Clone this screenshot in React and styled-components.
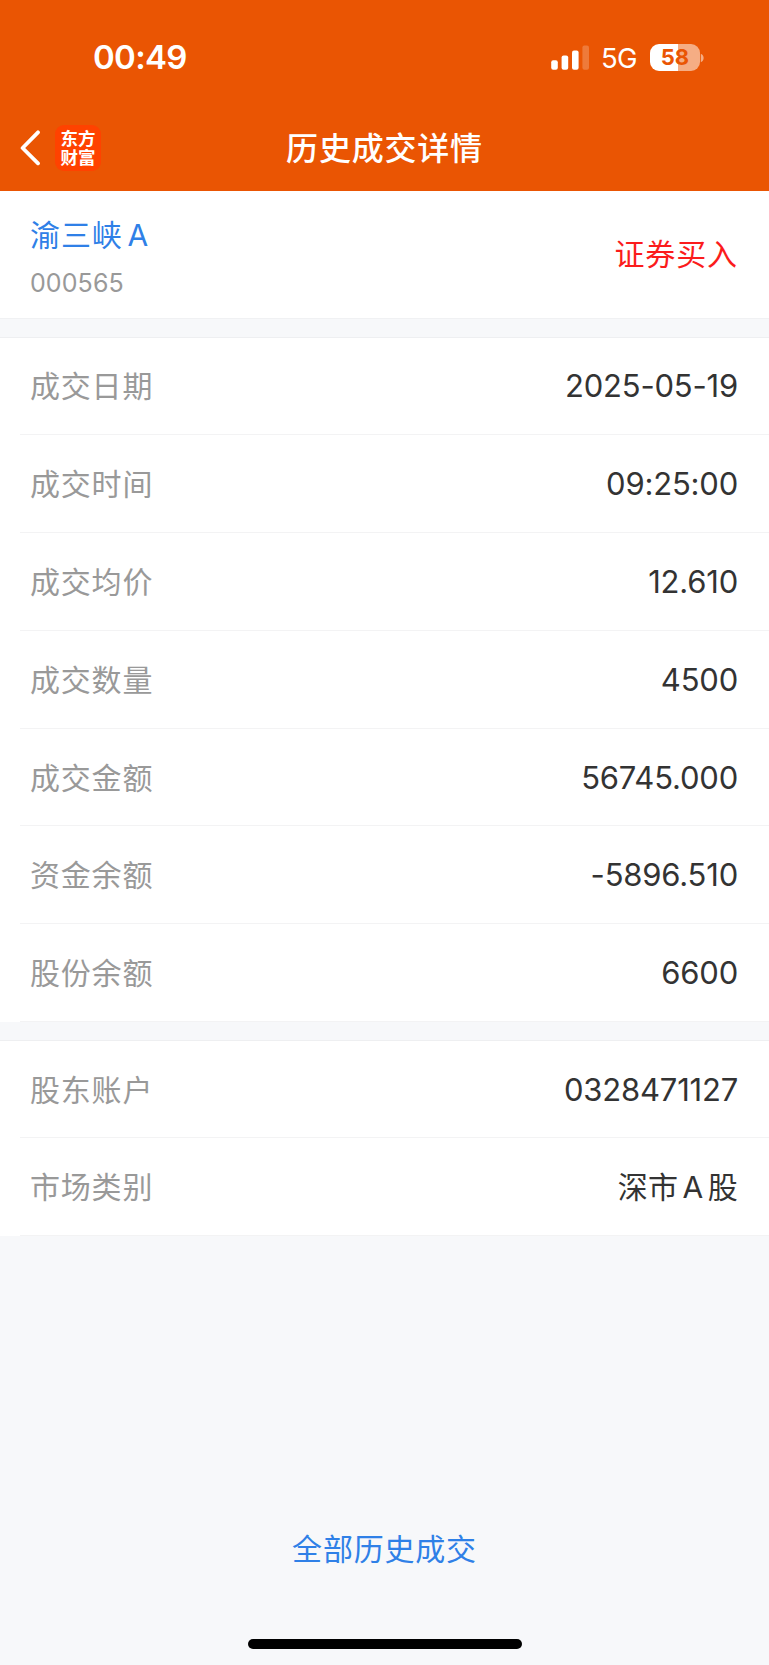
import styled, { createGlobalStyle } from "styled-components";

const dealRows = [
  { label: "成交日期", value: "2025-05-19" },
  { label: "成交时间", value: "09:25:00" },
  { label: "成交均价", value: "12.610" },
  { label: "成交数量", value: "4500" },
  { label: "成交金额", value: "56745.000" },
  { label: "资金余额", value: "-5896.510" },
  { label: "股份余额", value: "6600" },
];

const accountRows = [
  { label: "股东账户", value: "0328471127" },
  { label: "市场类别", value: "深市 A 股", cjk: true },
];

const StatusBar = () => (
  <Status>
    <Time>00:49</Time>
    <StatusRight>
      <svg width="39" height="26" viewBox="0 0 39 26" fill="#fff">
        <rect x="0.2" y="15.2" width="6.6" height="9.6" rx="2" />
        <rect x="10.6" y="10.4" width="6.6" height="14.4" rx="2" />
        <rect x="21" y="5.4" width="6.6" height="19.4" rx="2" />
        <rect x="31.4" y="0.4" width="6.6" height="24.4" rx="2" opacity="0.22" />
      </svg>
      <Network>5G</Network>
      <Battery>
        <BatteryBody>58</BatteryBody>
        <svg width="4" height="10" viewBox="0 0 4 10">
          <path d="M0.8 0.8C4.6 2.4 4.6 7.6 0.8 9.2Z" fill="#f5ad84" />
        </svg>
      </Battery>
    </StatusRight>
  </Status>
);

const Rows = ({ rows }) => (
  <Section>
    {rows.map((row) => (
      <Row key={row.label}>
        <Label>{row.label}</Label>
        <Value $cjk={row.cjk}>{row.value}</Value>
      </Row>
    ))}
  </Section>
);

const App = () => {
  return (
    <Page>
      <GlobalStyle />
      <Header>
        <StatusBar />
        <NavBar>
          <NavSide>
            <svg width="21" height="36" viewBox="0 0 21 36" fill="none">
              <path
                d="M18 2.3L2.6 18L18 33.3"
                stroke="#fff"
                strokeWidth="3.8"
                strokeLinecap="round"
                strokeLinejoin="round"
              />
            </svg>
            <Logo>
              东方
              <br />
              财富
            </Logo>
          </NavSide>
          <Title>历史成交详情</Title>
          <NavSide />
        </NavBar>
      </Header>
      <Summary>
        <div>
          <StockName>渝三峡 A</StockName>
          <StockCode>000565</StockCode>
        </div>
        <Direction>证券买入</Direction>
      </Summary>
      <Gap $lined />
      <Rows rows={dealRows} />
      <Gap />
      <Rows rows={accountRows} />
      <Footer>
        <AllLink>全部历史成交</AllLink>
        <HomeBar />
      </Footer>
    </Page>
  );
};

export default App;

const GlobalStyle = createGlobalStyle`
  * {
    box-sizing: border-box;
  }
  body {
    margin: 0;
    background: #f7f8fa;
    font-family: Inter, "Noto Sans CJK SC", sans-serif;
  }
  svg {
    display: block;
  }
`;

const Page = styled.div`
  display: flex;
  flex-direction: column;
  width: 769px;
  height: 1665px;
  overflow: hidden;
  background: #f7f8fa;
`;

const Header = styled.header`
  height: 191px;
  flex-shrink: 0;
  background: #ea5503;
  color: #fff;
`;

const Status = styled.div`
  display: flex;
  justify-content: space-between;
  align-items: center;
  height: 105px;
  padding: 10px 65px 0 93px;
`;

const Time = styled.div`
  padding-bottom: 1px;
  font-size: 33px;
  font-weight: 600;
  line-height: 40px;
  letter-spacing: -0.7px;
`;

const StatusRight = styled.div`
  display: flex;
  align-items: center;
`;

const Network = styled.div`
  width: 49px;
  margin-left: 11px;
  font-size: 27.5px;
  line-height: 32px;
  letter-spacing: -0.8px;
`;

const Battery = styled.div`
  display: flex;
  align-items: center;
`;

const BatteryBody = styled.div`
  width: 50px;
  height: 27px;
  border-radius: 9px;
  background: linear-gradient(to right, #fff 57%, #f5ad84 57%);
  color: #ea5503;
  font-size: 22px;
  font-weight: 700;
  line-height: 27px;
  text-align: center;
`;

const NavBar = styled.div`
  display: flex;
  align-items: center;
  height: 86px;
  padding: 0 20px;
`;

const NavSide = styled.div`
  display: flex;
  flex: 1;
  align-items: center;
  gap: 14px;
`;

const Logo = styled.div`
  width: 46px;
  height: 46px;
  padding-top: 3px;
  border-radius: 9px;
  background: #ff4200;
  font-family: "Noto Sans CJK SC", sans-serif;
  font-size: 17.5px;
  font-weight: 700;
  line-height: 19px;
  text-align: center;
`;

const Title = styled.h1`
  margin: 0;
  padding-top: 2px;
  font-size: 32px;
  font-weight: 500;
  line-height: 44px;
  letter-spacing: 0.8px;
`;

const Summary = styled.section`
  display: flex;
  flex-shrink: 0;
  justify-content: space-between;
  align-items: center;
  height: 127px;
  padding: 0 31px 0 30px;
  background: #fff;
`;

const StockName = styled.div`
  padding-top: 3px;
  color: #2f80e7;
  font-size: 30px;
  line-height: 44px;
  letter-spacing: 0.9px;
  word-spacing: -4.5px;
`;

const StockCode = styled.div`
  margin-top: 9px;
  color: #999;
  font-size: 25px;
  line-height: 34px;
  letter-spacing: 0.1px;
`;

const Direction = styled.div`
  padding-bottom: 2px;
  color: #fb1c1c;
  font-size: 30px;
  line-height: 44px;
  letter-spacing: 0.9px;
`;

const Gap = styled.div`
  flex-shrink: 0;
  height: ${(props) => (props.$lined ? "19.5px" : "18.6px")};
  border-top: ${(props) => (props.$lined ? "1px solid #f0f1f3" : "none")};
  border-bottom: 1px solid #eeeff1;
`;

const Section = styled.section`
  flex-shrink: 0;
  background: #fff;
`;

const Row = styled.div`
  display: flex;
  justify-content: space-between;
  align-items: center;
  height: 97.8px;
  margin-left: 20px;
  padding: 0 31px 0 10px;
  border-bottom: 1px solid #f3f3f4;
`;

const Label = styled.div`
  padding-top: 1px;
  color: #999;
  font-size: 30px;
  line-height: 44px;
  letter-spacing: 0.8px;
`;

const Value = styled.div`
  padding-top: 1px;
  color: #333;
  font-size: ${(props) => (props.$cjk ? "30px" : "31px")};
  line-height: 44px;
  letter-spacing: ${(props) => (props.$cjk ? "0.3px" : "-0.2px")};
  word-spacing: ${(props) => (props.$cjk ? "-4.5px" : "0")};
`;

const Footer = styled.footer`
  display: flex;
  flex: 1;
  flex-direction: column;
  align-items: center;
  justify-content: flex-end;
  padding-bottom: 16px;
`;

const AllLink = styled.a`
  margin-bottom: 68px;
  color: #2f80e7;
  font-size: 30px;
  line-height: 44px;
  letter-spacing: 0.8px;
`;

const HomeBar = styled.div`
  width: 274px;
  height: 10px;
  border-radius: 5px;
  background: #000;
`;
